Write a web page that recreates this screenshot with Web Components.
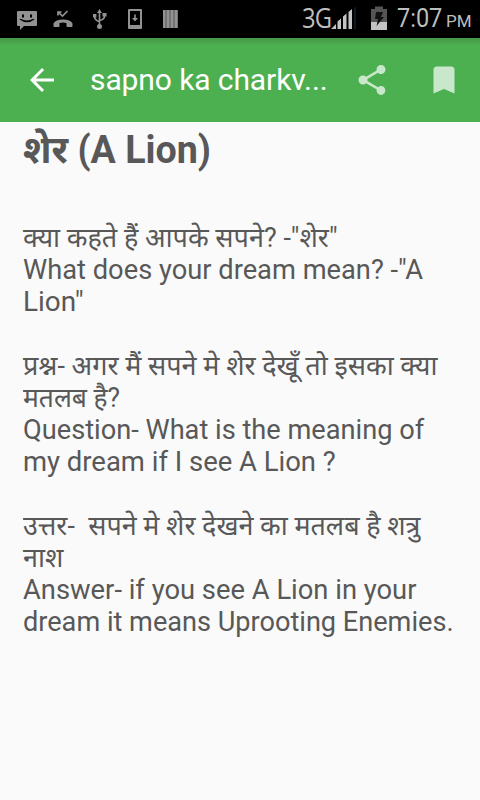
<!DOCTYPE html>
<html lang="hi">
<head>
<meta charset="utf-8">
<title>sapno ka charkvyuh</title>
<style>
body{
    margin: 0;
    background-color: #fafafa;
    font-family: Roboto, "Noto Sans", "Noto Sans Devanagari", sans-serif;
}
</style>
</head>
<body>

<dream-app>
    <status-bar slot="status" network="3G" time="7:07" period="PM"></status-bar>
    <app-bar slot="bar">sapno ka charkv...</app-bar>
    <dream-article>
        <text-line class="title" fit="188">शेर (A Lion)</text-line>
        <text-line class="gap"></text-line>
        <text-line fit="315">क्या कहते हैं आपके सपने? -"शेर"</text-line>
        <text-line fit="400">What does your dream mean? -"A</text-line>
        <text-line fit="61">Lion"</text-line>
        <text-line></text-line>
        <text-line fit="414">प्रश्न- अगर मैं सपने मे शेर देखूँ तो इसका क्या</text-line>
        <text-line fit="97">मतलब है?</text-line>
        <text-line fit="401">Question- What is the meaning of</text-line>
        <text-line fit="313">my dream if I see A Lion ?</text-line>
        <text-line></text-line>
        <text-line fit="397">उत्तर-&nbsp; सपने मे शेर देखने का मतलब है शत्रु</text-line>
        <text-line fit="40">नाश</text-line>
        <text-line fit="393">Answer- if you see A Lion in your</text-line>
        <text-line fit="431">dream it means Uprooting Enemies.</text-line>
    </dream-article>
</dream-app>

<script>
function attach(el, html) {
    const template = document.createElement("template");
    template.innerHTML = html;
    el.attachShadow({mode: "open"}).appendChild(template.content.cloneNode(true));
}

class DreamApp extends HTMLElement {
    constructor() {
        super();
        attach(this, `
<style>
:host{
    display: flex;
    flex-direction: column;
    width: 480px;
    height: 800px;
    overflow: hidden;
    background-color: #fafafa;
}
</style>
<slot name="status"></slot>
<slot name="bar"></slot>
<slot></slot>
`);
    }
}

class StatusBar extends HTMLElement {
    constructor() {
        super();
        attach(this, `
<style>
:host{
    display: flex;
    justify-content: space-between;
    flex: none;
    height: 38px;
    background-color: #000;
    color: #bebebe;
}
svg{
    display: block;
    flex: none;
}
.icons{
    display: flex;
    align-items: center;
    gap: 12px;
    padding-left: 15px;
    fill: #929292;
}
.system{
    display: flex;
    align-items: flex-start;
    padding-right: 9px;
}
.network, .time, .period{
    flex: none;
    white-space: nowrap;
}
.network{
    width: 29px;
    font-family: "Open Sans", sans-serif;
    font-size: 27px;
    line-height: 35px;
    transform: scaleX(.88);
    transform-origin: 0 50%;
    letter-spacing: -1px;
}
.battery{
    margin-left: 14px;
}
.time{
    width: 46px;
    margin-left: 10px;
    font-size: 25px;
    line-height: 38px;
    transform: scaleX(.94);
    transform-origin: 0 50%;
}
.period{
    width: 25px;
    font-size: 17px;
    line-height: 43px;
    margin-left: 3px;
}
</style>
<div class="icons">
    <svg width="24" height="38" viewBox="0 0 24 38">
        <path fill-rule="evenodd" d="M3 11h18q1 0 1 1v13q0 1-1 1H9l-4 4v-4H3q-1 0-1-1V12q0-1 1-1zM7 14.500v3h2v-3zM15 14.500v3h2v-3zM4.500 19.500q7.500 5.500 15 0l-1-.8q-6.500 3.600-13 0z"/>
    </svg>
    <svg width="24" height="38" viewBox="0 0 24 38">
        <path d="M2.500 26v-2.500q2-4 9.500-4t9.500 4V26q0 1-1 1h-4q-1 0-1-1v-3q-3.500-1-7 0v3q0 1-1 1h-4q-1 0-1-1z"/>
        <path d="M7 15.500v-3.500h3.500M7.500 12.300l4 3.700 5-5" fill="none" stroke="#929292" stroke-width="1.700"/>
    </svg>
    <svg width="24" height="38" viewBox="0 0 24 38">
        <path d="M12.500 9l2.500 4h-5zM10 26.500a2.500 2.500 0 1 1 5 0a2.500 2.500 0 1 1-5 0zM6 14h3.400v3.400H6zM15.500 13h4v3.500h-4z"/>
        <path d="M12.500 12v13M7.700 17q0 3 4.800 4.800M17.500 16q0 3.500-5 4.500" fill="none" stroke="#929292" stroke-width="1.600"/>
    </svg>
    <svg width="24" height="38" viewBox="0 0 24 38">
        <path fill-rule="evenodd" d="M6 9h12q1 0 1 1v18q0 1-1 1H6q-1 0-1-1V10q0-1 1-1zM7 11v14h10V11z"/>
        <path d="M11.200 14.500h1.600v3.500h2.200l-3 3.500-3-3.500h2.200z"/>
    </svg>
    <svg width="24" height="38" viewBox="0 0 24 38">
        <path d="M4 10h15v18H4z" fill="#555"/>
        <path d="M4 10h2.500v18H4zM7.500 10h3v18h-3zM11.500 10h3v18h-3zM15.500 10h3v18h-3z"/>
    </svg>
</div>
<div class="system">
    <span class="network"></span>
    <svg class="signal" width="26" height="38" viewBox="0 0 26 38">
        <path fill="#c4c4c4" d="M0 29l5-5v5zM6.500 21.500l3.500-3V29H6.500zM12 16.500l3.500-3V29H12zM17.500 12l3.500-3V29h-3.500z"/>
        <path fill="#10171c" d="M23 8l2-1.500V29h-2z"/>
    </svg>
    <svg class="battery" width="16" height="38" viewBox="0 0 16 38">
        <path fill="#555" d="M0 9h4V6.500h8V9h4v21H0z"/>
        <path fill="#c4c4c4" d="M0 22h16v8H0z"/>
        <path fill="#111" d="M5 12h7l-2 5h3L5.500 26l1.500-7H4z"/>
    </svg>
    <span class="time"></span>
    <span class="period"></span>
</div>
`);
    }

    connectedCallback() {
        for (const name of ["network", "time", "period"]) {
            this.shadowRoot.querySelector("." + name).textContent = this.getAttribute(name);
        }
    }
}

class AppBar extends HTMLElement {
    constructor() {
        super();
        attach(this, `
<style>
:host{
    display: flex;
    align-items: center;
    flex: none;
    box-sizing: border-box;
    height: 84px;
    padding: 0 18px 0 24px;
    color: #fff;
    background: linear-gradient(#449745, #4caf50 7px);
}
svg{
    flex: none;
    width: 36px;
    height: 36px;
    fill: #fff;
}
.title{
    flex: 1;
    margin-left: 30px;
    font-size: 30px;
    line-height: 40px;
    letter-spacing: -.1px;
    white-space: nowrap;
}
.action{
    fill: #c9e7cb;
}
.action + .action{
    margin-left: 36px;
}
</style>
<svg viewBox="0 0 24 24"><path d="M20 11H7.830l5.590-5.590L12 4l-8 8 8 8 1.410-1.410L7.830 13H20v-2z"/></svg>
<div class="title"><slot></slot></div>
<svg class="action" viewBox="0 0 24 24"><path d="M18 16.080c-.76 0-1.440.3-1.960.77L8.910 12.700c.05-.23.09-.46.09-.7s-.04-.47-.09-.7l7.050-4.110c.54.5 1.250.81 2.040.81 1.660 0 3-1.340 3-3s-1.340-3-3-3-3 1.340-3 3c0 .24.04.47.09.7L8.040 9.810C7.500 9.310 6.790 9 6 9c-1.660 0-3 1.340-3 3s1.340 3 3 3c.79 0 1.500-.31 2.040-.81l7.120 4.160c-.05.21-.08.43-.08.65 0 1.610 1.310 2.920 2.920 2.920s2.920-1.310 2.920-2.920-1.310-2.920-2.920-2.920z"/></svg>
<svg class="action" viewBox="0 0 24 24"><path d="M17 3H7c-1.100 0-2 .9-2 2v16l7-3 7 3V5c0-1.100-.9-2-2-2z"/></svg>
`);
    }
}

class DreamArticle extends HTMLElement {
    constructor() {
        super();
        attach(this, `
<style>
:host{
    display: flex;
    flex-direction: column;
    padding: 4px 22px 0 23px;
    color: #585858;
    font-size: 27px;
}
::slotted(.title){
    --line: 49px;
    font-size: 38px;
    font-weight: bold;
}
::slotted(.gap){
    --line: 47px;
}
</style>
<slot></slot>
`);
    }
}

// one line of text, stretched or squeezed to the width given in "fit"
class TextLine extends HTMLElement {
    constructor() {
        super();
        attach(this, `
<style>
:host{
    display: block;
    height: var(--line, 32px);
    line-height: var(--line, 32px);
    white-space: nowrap;
}
span{
    display: inline-block;
    transform-origin: 0 50%;
}
</style>
<span><slot></slot></span>
`);
    }

    connectedCallback() {
        const fit = Number(this.getAttribute("fit"));
        const span = this.shadowRoot.querySelector("span");
        if (fit) {
            span.style.transform = `scaleX(${fit / span.offsetWidth})`;
        }
    }
}

window.customElements.define("dream-app", DreamApp);
window.customElements.define("status-bar", StatusBar);
window.customElements.define("app-bar", AppBar);
window.customElements.define("dream-article", DreamArticle);
window.customElements.define("text-line", TextLine);
</script>
</body>
</html>
